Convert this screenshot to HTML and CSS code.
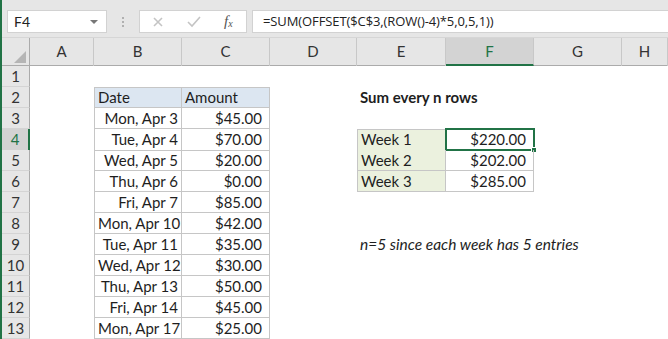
FILE: index.html
```html
<!DOCTYPE html>
<html lang="en">
<head>
    <meta charset="UTF-8">
    <title>Sum every n rows</title>
    <link rel="stylesheet" href="styles.css">
</head>
<body>
    <div class="toolbar">
        <div class="namebox">
            <span>F4</span>
            <span class="caret"></span>
        </div>
        <div class="grip"><i></i><i></i><i></i></div>
        <div class="buttons">
            <svg class="icon" width="14" height="14" viewBox="0 0 14 14"><path d="M3 3 L11 11 M11 3 L3 11" stroke="#c4c4c4" stroke-width="1.6" fill="none"/></svg>
            <svg class="icon" width="16" height="14" viewBox="0 0 16 14"><path d="M2 7 L6 11 L14 2" stroke="#c4c4c4" stroke-width="1.6" fill="none"/></svg>
            <span class="fx">f<sub>x</sub></span>
        </div>
        <div class="formula">=SUM(OFFSET($C$3,(ROW()-4)*5,0,5,1))</div>
    </div>

    <div class="sheet">
        <div class="row head">
            <div class="corner"><span class="tri"></span></div>
            <div class="col">A</div>
            <div class="col">B</div>
            <div class="col">C</div>
            <div class="col">D</div>
            <div class="col">E</div>
            <div class="col sel">F</div>
            <div class="col">G</div>
            <div class="col">H</div>
        </div>

        <div class="row">
            <div class="num">1</div>
            <div></div><div></div><div></div><div></div><div></div><div></div><div></div><div></div>
        </div>
        <div class="row">
            <div class="num">2</div>
            <div></div>
            <div class="cell th top left">Date</div>
            <div class="cell th top">Amount</div>
            <div></div>
            <div class="title">Sum every n rows</div>
            <div></div><div></div><div></div>
        </div>
        <div class="row">
            <div class="num">3</div>
            <div></div>
            <div class="cell left r">Mon, Apr 3</div>
            <div class="cell r money">$45.00</div>
            <div></div><div></div><div></div><div></div><div></div>
        </div>
        <div class="row">
            <div class="num sel">4</div>
            <div></div>
            <div class="cell left r">Tue, Apr 4</div>
            <div class="cell r money">$70.00</div>
            <div></div>
            <div class="cell label top left">Week 1</div>
            <div class="cell r money top active">$220.00<span class="handle"></span></div>
            <div></div><div></div>
        </div>
        <div class="row">
            <div class="num">5</div>
            <div></div>
            <div class="cell left r">Wed, Apr 5</div>
            <div class="cell r money">$20.00</div>
            <div></div>
            <div class="cell label left">Week 2</div>
            <div class="cell r money">$202.00</div>
            <div></div><div></div>
        </div>
        <div class="row">
            <div class="num">6</div>
            <div></div>
            <div class="cell left r">Thu, Apr 6</div>
            <div class="cell r money">$0.00</div>
            <div></div>
            <div class="cell label left">Week 3</div>
            <div class="cell r money">$285.00</div>
            <div></div><div></div>
        </div>
        <div class="row">
            <div class="num">7</div>
            <div></div>
            <div class="cell left r">Fri, Apr 7</div>
            <div class="cell r money">$85.00</div>
            <div></div><div></div><div></div><div></div><div></div>
        </div>
        <div class="row">
            <div class="num">8</div>
            <div></div>
            <div class="cell left r">Mon, Apr 10</div>
            <div class="cell r money">$42.00</div>
            <div></div><div></div><div></div><div></div><div></div>
        </div>
        <div class="row">
            <div class="num">9</div>
            <div></div>
            <div class="cell left r">Tue, Apr 11</div>
            <div class="cell r money">$35.00</div>
            <div></div>
            <div class="note">n=5 since each week has 5 entries</div>
            <div></div><div></div><div></div>
        </div>
        <div class="row">
            <div class="num">10</div>
            <div></div>
            <div class="cell left r">Wed, Apr 12</div>
            <div class="cell r money">$30.00</div>
            <div></div><div></div><div></div><div></div><div></div>
        </div>
        <div class="row">
            <div class="num">11</div>
            <div></div>
            <div class="cell left r">Thu, Apr 13</div>
            <div class="cell r money">$50.00</div>
            <div></div><div></div><div></div><div></div><div></div>
        </div>
        <div class="row">
            <div class="num">12</div>
            <div></div>
            <div class="cell left r">Fri, Apr 14</div>
            <div class="cell r money">$45.00</div>
            <div></div><div></div><div></div><div></div><div></div>
        </div>
        <div class="row">
            <div class="num">13</div>
            <div></div>
            <div class="cell left r">Mon, Apr 17</div>
            <div class="cell r money">$25.00</div>
            <div></div><div></div><div></div><div></div><div></div>
        </div>
    </div>
</body>
</html>
```

FILE: styles.css
```css
* {
    box-sizing: border-box;
}
body {
    margin: 0;
    height: 339px;
    overflow: hidden;
    background: #fff;
    border-left: 2px solid #217346;
    font-family: Lato, "Open Sans", sans-serif;
    font-size: 15px;
    color: #1e1e1e;
}

/* formula bar */
.toolbar {
    height: 38px;
    background: #e6e6e6;
    border-bottom: 1px solid #d6d6d6;
    display: flex;
    align-items: flex-start;
    padding: 10px 0 0 5px;
}
.namebox {
    width: 100px;
    height: 23px;
    background: #fff;
    border: 1px solid #d2d2d2;
    display: flex;
    align-items: center;
    justify-content: space-between;
    padding: 0 8px 0 6px;
    font-size: 14px;
    color: #222;
}
.caret {
    width: 0;
    height: 0;
    border-left: 4px solid transparent;
    border-right: 4px solid transparent;
    border-top: 4px solid #777;
}
.grip {
    width: 32px;
    height: 23px;
    display: flex;
    flex-direction: column;
    align-items: center;
    justify-content: center;
    gap: 2px;
}
.grip i {
    width: 2px;
    height: 2px;
    background: #b0b0b0;
}
.buttons {
    width: 108px;
    height: 23px;
    background: #fff;
    border: 1px solid #d2d2d2;
    display: flex;
    align-items: center;
    padding: 0 8px 0 11px;
    gap: 21px;
}
.fx {
    font-family: "Liberation Serif", serif;
    font-style: italic;
    font-size: 15px;
    color: #555;
    margin-left: 1px;
}
.fx sub {
    font-size: 10px;
    vertical-align: -1px;
}
.formula {
    flex: 1;
    height: 23px;
    margin-left: 5px;
    background: #fff;
    border: 1px solid #d2d2d2;
    border-right: none;
    padding: 0 10px;
    line-height: 21px;
    font-family: "Open Sans", sans-serif;
    font-size: 13px;
    letter-spacing: -0.1px;
    color: #222;
}

/* grid */
.row {
    display: grid;
    grid-template-columns: 28px 64px 88px 88px 87px 89px 88px 88px 1fr;
    height: 21px;
}
.row.head {
    height: 28px;
    background: #e6e6e6;
    border-bottom: 1px solid #ababab;
}
.corner {
    border-right: 1px solid #ababab;
    position: relative;
}
.tri {
    position: absolute;
    right: 3px;
    bottom: 3px;
    width: 0;
    height: 0;
    border-left: 12px solid transparent;
    border-bottom: 12px solid #b5b5b5;
}
.col {
    border-right: 1px solid #c8c8c8;
    text-align: center;
    line-height: 27px;
    color: #333;
}
.col.sel {
    background: #d3d3d3;
    color: #217346;
    border-bottom: 2px solid #217346;
    line-height: 26px;
}
.num {
    background: #e6e6e6;
    border-right: 1px solid #ababab;
    border-bottom: 1px solid #d4d4d4;
    text-align: center;
    line-height: 20px;
    color: #333;
}
.num.sel {
    background: #d3d3d3;
    color: #217346;
    border-right: 2px solid #217346;
}

.cell {
    border-right: 1px solid #c6c6c6;
    border-bottom: 1px solid #c6c6c6;
    padding: 0 3px;
    line-height: 20px;
    white-space: nowrap;
    position: relative;
}
.cell.top {
    border-top: 1px solid #c6c6c6;
    line-height: 19px;
}
.cell.left {
    border-left: 1px solid #c6c6c6;
}
.cell.r {
    text-align: right;
}
.cell.money {
    padding-right: 7px;
}
.cell.th {
    background: #dce6f1;
}
.cell.label {
    background: #ebf1de;
}
.cell.active {
    border: 2px solid #217346;
    margin: -1px 0 0 -1px;
    width: 90px;
    height: 23px;
    padding-right: 7px;
    line-height: 19px;
}
.handle {
    position: absolute;
    right: -4px;
    bottom: -4px;
    width: 6px;
    height: 6px;
    background: #217346;
    border: 1px solid #fff;
}
.title {
    font-weight: bold;
    padding: 0 3px;
    line-height: 21px;
    white-space: nowrap;
}
.note {
    font-style: italic;
    font-size: 15.5px;
    padding: 0 3px;
    line-height: 21px;
    white-space: nowrap;
}
```
